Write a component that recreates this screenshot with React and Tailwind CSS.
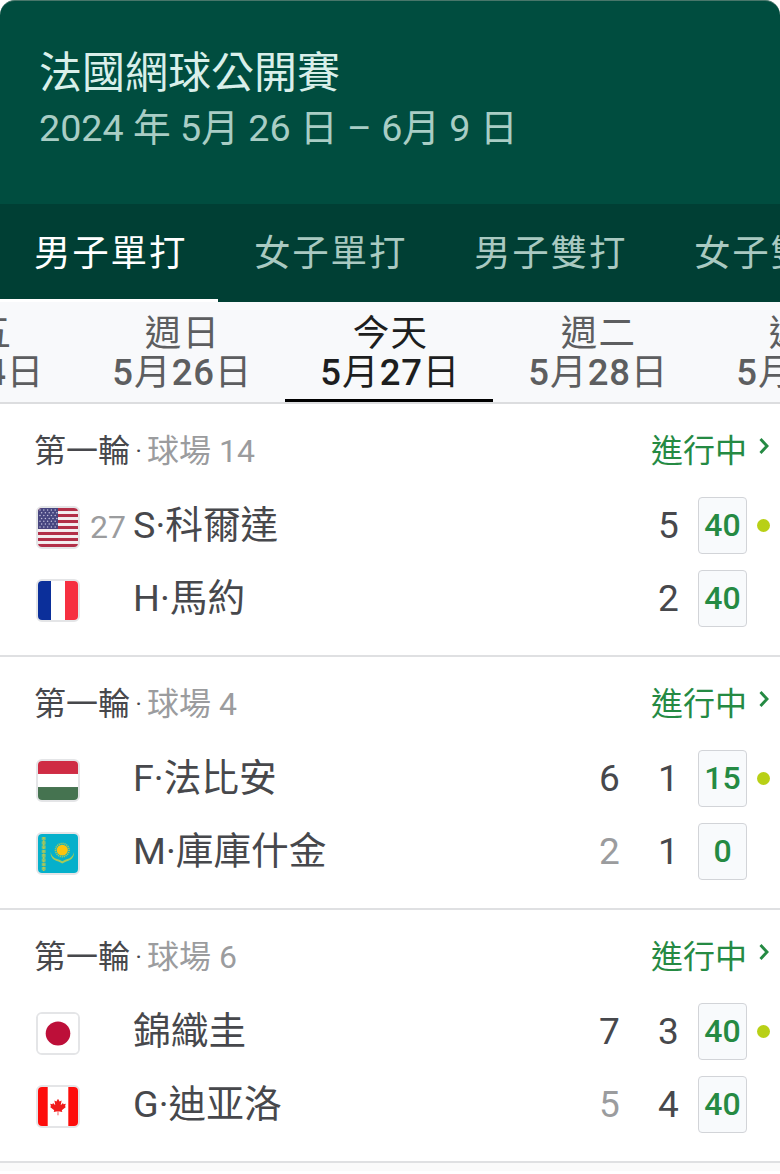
import React from "react";

const tabs = ["男子單打", "女子單打", "男子雙打", "女子雙打"];

const days = [
  { id: 1, label: "週五", date: "5月24日" },
  { id: 2, label: "週日", date: "5月26日" },
  { id: 3, label: "今天", date: "5月27日", active: true },
  { id: 4, label: "週二", date: "5月28日" },
  { id: 5, label: "週三", date: "5月29日" },
];

const matches = [
  {
    id: 1,
    court: "球場 14",
    players: [
      { flag: "us", seed: "27", name: "S·科爾達", sets: ["5"], point: "40", serving: true },
      { flag: "fr", name: "H·馬約", sets: ["2"], point: "40" },
    ],
  },
  {
    id: 2,
    court: "球場 4",
    players: [
      { flag: "hu", name: "F·法比安", sets: ["6", "1"], point: "15", serving: true },
      { flag: "kz", name: "M·庫庫什金", sets: ["2", "1"], lost: true, point: "0" },
    ],
  },
  {
    id: 3,
    court: "球場 6",
    players: [
      { flag: "jp", name: "錦織圭", sets: ["7", "3"], point: "40", serving: true },
      { flag: "ca", name: "G·迪亚洛", sets: ["5", "4"], lost: true, point: "40" },
    ],
  },
];

const stripes = [0, 1, 2, 3, 4, 5, 6];

const FlagArt = ({ code }) => {
  if (code === "us") {
    return (
      <>
        <rect width="40" height="40" fill="#f3eef0" />
        {stripes.map((i) => (
          <rect key={i} y={i * 6.15} width="40" height="3.1" fill="#b22f48" />
        ))}
        <rect width="20" height="21.5" fill="#474680" />
        {stripes.map((row) =>
          [0, 1, 2, 3, 4].map((col) => (
            <circle
              key={`${row}-${col}`}
              cx={2 + col * 3.8 + (row % 2) * 1.6}
              cy={2 + row * 2.9}
              r="0.75"
              fill="#c3c1dc"
            />
          ))
        )}
      </>
    );
  }
  if (code === "fr") {
    return (
      <>
        <rect width="40" height="40" fill="#fff" />
        <rect width="13" height="40" fill="#0b2f9a" />
        <rect x="27" width="13" height="40" fill="#f62f40" />
      </>
    );
  }
  if (code === "hu") {
    return (
      <>
        <rect width="40" height="40" fill="#fff" />
        <rect width="40" height="13.3" fill="#cf2c44" />
        <rect y="26.7" width="40" height="13.3" fill="#457350" />
      </>
    );
  }
  if (code === "kz") {
    return (
      <>
        <rect width="40" height="40" fill="#05b0cb" />
        <path d="M5.7 3V38" stroke="#7fc07c" strokeWidth="4" strokeDasharray="3.4 1" />
        <path d="M5.7 3V38" stroke="#b6c84a" strokeWidth="1.6" strokeDasharray="2.2 1.2" />
        <circle cx="24.3" cy="16.5" r="6.8" fill="none" stroke="#a6ca58" strokeWidth="1.6" strokeDasharray="1.2 0.8" />
        <circle cx="24.3" cy="16.5" r="5.6" fill="#fdc40e" />
        <path
          d="M12.8 18.500c.6 5 4.200 7 8.600 7.800l2.900 1.600 2.900-1.600c4.400-.8 8-2.800 8.600-7.800.8 5.600-3 8.600-7.600 9.800l-3.900 2-3.900-2c-4.600-1.200-8.400-4.200-7.600-9.800z"
          fill="#a6ca58"
        />
      </>
    );
  }
  if (code === "jp") {
    return (
      <>
        <rect width="40" height="40" fill="#fff" />
        <circle cx="20" cy="20" r="12.300" fill="#bd0f39" />
      </>
    );
  }
  return (
    <>
      <rect width="40" height="40" fill="#fff" />
      <rect width="9.700" height="40" fill="#fd0d0b" />
      <rect x="30.300" width="9.700" height="40" fill="#fd0d0b" />
      <path
        d="M20 12l-1.600 2.900-2-1 .9 4.700-2.300-2.300-.5 1.300-2.300-.4.800 2.600-.9.600 4.100 3.500-.5 1.700 4-.7-.1 4h.8l-.1-4 4 .7-.5-1.700 4.100-3.500-.9-.6.800-2.600-2.300.4-.5-1.300-2.300 2.300.9-4.700-2 1z"
        fill="#f01b1b"
      />
    </>
  );
};

const Flag = ({ code }) => (
  <div className="mt-[3px] h-[43px] w-[44px] rounded-[6px] border-2 border-[#e4e5e7] overflow-hidden">
    <svg viewBox="0 0 40 40" preserveAspectRatio="none" className="block h-full w-full">
      <FlagArt code={code} />
    </svg>
  </div>
);

// digits are heavier than the characters around them
const DayDate = ({ text }) =>
  text.split(/(\d+)/).map((part, i) => (
    <span key={i} className={/\d/.test(part) ? "font-medium tracking-[0.8px]" : ""}>
      {part}
    </span>
  ));

const Player = ({ player }) => (
  <div className="flex h-[57px] items-center">
    <Flag code={player.flag} />
    <div className="w-[53px] pl-[10px] pt-[3px] text-[32px] leading-none text-[#9b9c9e]">
      {player.seed}
    </div>
    <div className="flex-1 whitespace-nowrap text-[37.700px] leading-none text-[#47484c]">
      {player.name}
    </div>
    <div className="flex text-[37px] leading-none text-[#47484c]">
      {player.sets.map((set, i) => (
        <span
          key={i}
          className={
            player.lost && i === 0
              ? "w-[59px] text-center text-[#9b9c9e]"
              : "w-[59px] text-center"
          }
        >
          {set}
        </span>
      ))}
    </div>
    <div className="flex h-[57px] w-[49px] items-center justify-center rounded-[4px] border-[1.500px] border-[#d2d4d8] bg-[#f8fafc] pb-[2px] text-[32px] font-medium text-[#258a43]">
      {player.point}
    </div>
    <div className="flex w-[33px] justify-center">
      {player.serving && <span className="h-[13px] w-[13px] rounded-full bg-[#b8d016]" />}
    </div>
  </div>
);

const App = () => {
  return (
    <div className="h-[1174px] w-[780px] overflow-hidden bg-white font-['Roboto','Noto_Sans_CJK_TC',sans-serif] font-normal">
      <header className="h-[204px] rounded-t-[15px] border-t border-[#48766a] bg-[#004d3f] pl-[39px] pt-[45px]">
        <h1 className="h-[55px] text-[43px] leading-[54px] text-[#d9efea]">法國網球公開賽</h1>
        <p className="text-[37.700px] leading-[54px] text-[#a9cdc5]">2024 年 5月 26 日 – 6月 9 日</p>
      </header>

      <nav className="flex h-[98px] bg-[#003f34]">
        {tabs.map((tab, i) => (
          <button
            key={tab}
            className={
              i === 0
                ? "w-[218px] shrink-0 whitespace-nowrap border-b-[3px] border-white pl-[34px] pt-[5px] text-left text-[36.500px] tracking-[1.800px] text-white"
                : "w-[220px] shrink-0 whitespace-nowrap border-b-[3px] border-transparent pl-[36px] pt-[5px] text-left text-[36.500px] tracking-[1.800px] text-[#a9c9c1]"
            }
          >
            {tab}
          </button>
        ))}
      </nav>

      <div className="h-[102px] overflow-hidden border-b-2 border-[#dcdddf] bg-[#f8f9fb]">
        <div className="-ml-[131px] flex">
          {days.map((day) => (
            <div
              key={day.id}
              className={
                day.active
                  ? "h-[100px] w-[208px] shrink-0 border-b-[3px] border-black pl-[3px] pt-[12px] text-center text-[36.500px] leading-[39px] tracking-[1.300px] text-[#1d1e20]"
                  : "h-[100px] w-[208px] shrink-0 pl-[3px] pt-[12px] text-center text-[36.500px] leading-[39px] tracking-[1.300px] text-[#5d5e60]"
              }
            >
              <div>{day.label}</div>
              <div>
                <DayDate text={day.date} />
              </div>
            </div>
          ))}
        </div>
      </div>

      {matches.map((match) => (
        <section key={match.id} className="h-[253px] border-b-2 border-[#dfe0e2] pl-[36px]">
          <div className="-ml-[2px] flex h-[93px] items-center text-[32px] leading-none">
            <span className="text-[#47484c]">第一輪</span>
            <span className="w-[17px] text-center text-[24px] text-[#47484c]">·</span>
            <span className="text-[#9b9c9e]">{match.court}</span>
            <span className="ml-auto text-[#258a43]">進行中</span>
            <svg viewBox="0 0 10 18" className="mb-[9px] ml-[12px] mr-[11px] h-[18px] w-[10px]">
              <path d="M1.500 2l6.500 7-6.500 7" fill="none" stroke="#258a43" strokeWidth="2.900" />
            </svg>
          </div>
          <div className="flex flex-col gap-4">
            {match.players.map((player) => (
              <Player key={player.name} player={player} />
            ))}
          </div>
        </section>
      ))}
      <div className="h-[8px] bg-[#fafafa]" />
    </div>
  );
};

export default App;
